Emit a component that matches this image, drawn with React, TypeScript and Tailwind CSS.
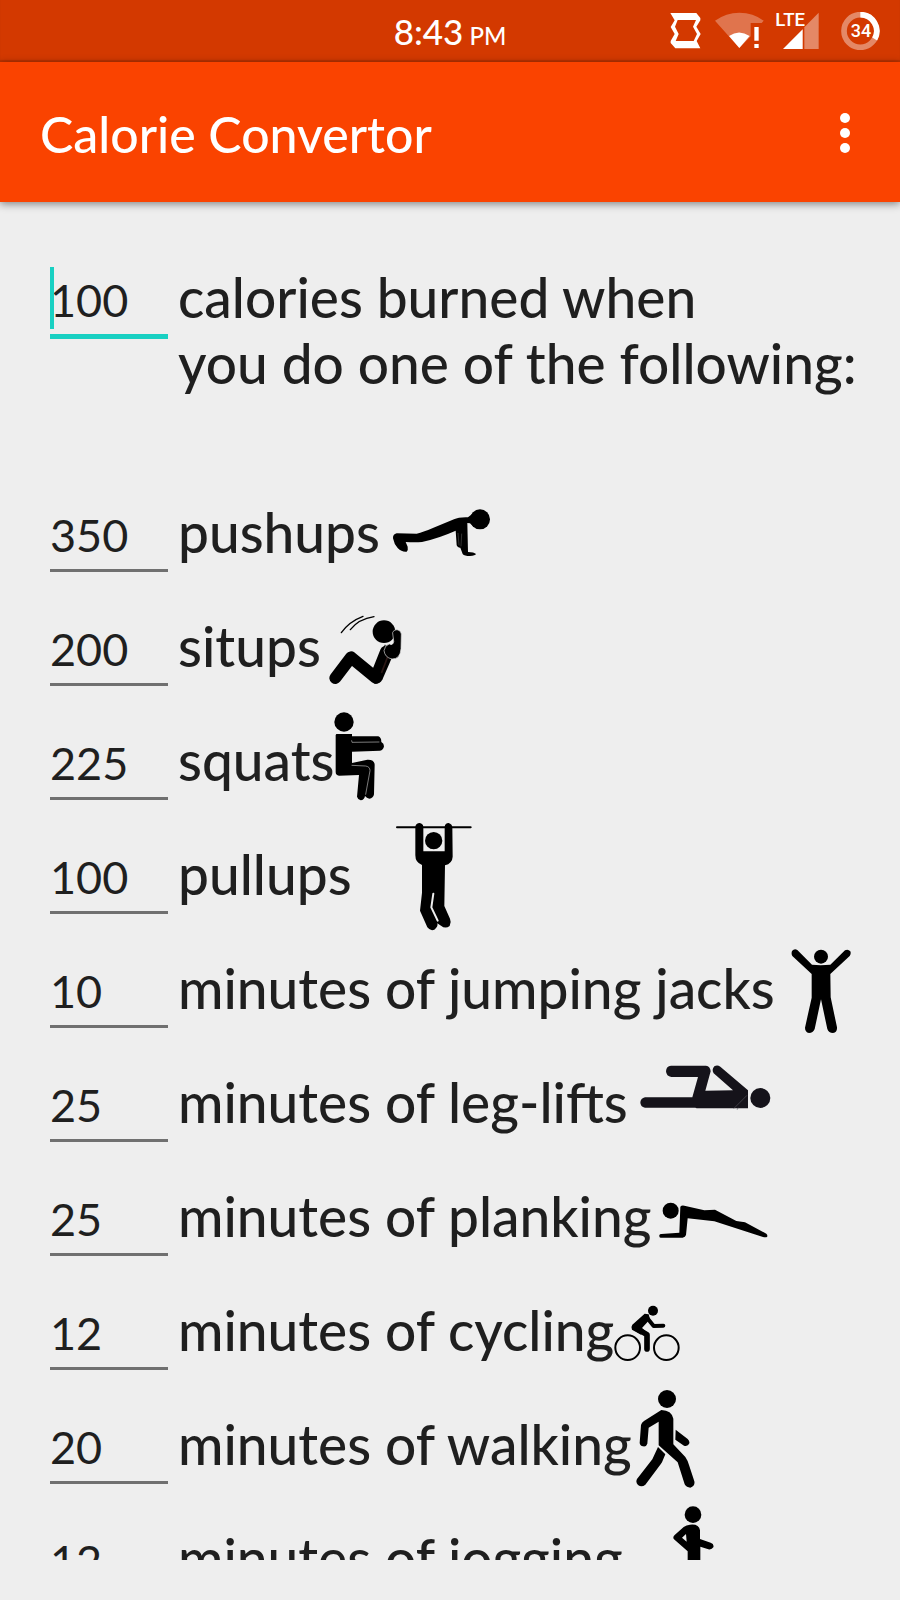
import type { ReactNode } from "react";

type FigureProps = { viewBox: string; className: string; children: ReactNode };

function Figure({ viewBox, className, children }: FigureProps) {
  return (
    <svg
      aria-hidden="true"
      viewBox={viewBox}
      className={`h-[114px] shrink-0 ${className}`}
      fill="#000"
      stroke="#000"
      strokeWidth="0"
      strokeLinecap="round"
      strokeLinejoin="round"
    >
      {children}
    </svg>
  );
}

const pushups = (
  <Figure viewBox="36 -44 294 342" className="ml-3 w-[98px]">
    <circle cx="300" cy="86" r="30" />
    <path d="M50 128Q38 131 39 143Q42 160 53 172Q66 185 80 183Q85 177 83 168L77 154Q105 156 126 154Q178 142 227 120L230 164Q233 172 241 171L248 190Q253 196 270 196Q286 195 288 190Q282 184 264 184L262 97L270 98L282 110L284 64L264 80Q236 79 222 86L164 110Q130 125 110 129Z" />
    <path d="M234 128L237 163M243 166L245 130" fill="none" stroke="#999" strokeWidth="1" />
  </Figure>
);

const situps = (
  <Figure viewBox="56 -31 219 342" className="ml-2 w-[73px]">
    <path d="M93 97Q116 64 158 48M120 88Q145 56 191 49" fill="none" strokeWidth="4" />
    <circle cx="221" cy="94" r="34" />
    <path d="M75 233L122 171L196 232L227 154" fill="none" strokeWidth="36" />
    <path d="M185 220L224 132L243 176L216 238Q208 252 192 250Z" />
    <path d="M214 216Q224 191 234 163" fill="none" stroke="#2b1715" strokeWidth="5" />
    <path d="M247 96Q249 88 260 88Q272 90 273 101L272 145Q270 176 245 176Q224 172 221 151Q223 135 237 131Q247 137 250 125Z" stroke="#ddd" strokeWidth="2" />
  </Figure>
);

const squats = (
  <Figure viewBox="45 11 150 342" className="w-[50px]">
    <circle cx="75" cy="65" r="29" />
    <path d="M50 104L52 101L99 101L99 108L178 108Q187 111 187 125Q195 129 195 138Q193 150 183 151L99 154L99 188L145 178Q166 177 167 193L165 282Q163 294 151 295Q143 294 138 287Q136 299 125 300Q116 297 114 289L120 224L60 226Q50 225 50 215Z" />
    <path d="M98 121L99 126L180 125M99 195L140 197Q153 199 153 211L140 282" fill="none" stroke="#b8b8b8" strokeWidth="2" />
  </Figure>
);

const pullups = (
  <Figure viewBox="46 24 228 342" className="ml-11 w-[76px]">
    <path d="M49 52H270" strokeWidth="6" />
    <circle cx="159" cy="92" r="26" />
    <path d="M104 50Q106 39 117 39Q127 41 128 50V124H192V50Q193 40 204 39Q214 42 215 51L216 140Q215 160 193 166L191 288L208 326Q213 337 207 348Q194 358 181 347L170 340Q173 350 161 359Q149 364 140 352L118 302L124 248V165Q104 158 104 136Z" />
    <path d="M158 251L152 292L171 332" fill="none" stroke="#eeeeee" strokeWidth="6" />
  </Figure>
);

const jumpingJacks = (
  <Figure viewBox="64 6 180 342" className="ml-4 w-[60px]">
    <circle cx="154" cy="80" r="21" />
    <path d="M67 63Q74 55 83 60L127 104L153 106L182 104L226 61Q235 56 242 64Q245 71 240 78L182 132L183 202L202 292Q203 307 190 309Q177 309 173 297L154 208L135 297Q130 309 118 309Q106 306 106 293L126 203V132L68 78Q64 71 67 63Z" />
  </Figure>
);

const legLifts = (
  <Figure viewBox="62 -11 393 342" className="ml-3 w-[131px]">
    <g fill="#15131a">
      <circle cx="423" cy="145" r="30" />
      <path d="M77 143H219L236 82H156Q141 80 140 65Q141 49 155 48H260Q273 50 274 65L258 123L341 122L283 71Q276 60 285 50Q294 45 303 51L386 122V176H232L228 174H77Q63 172 63 158Q64 146 77 143Z" />
    </g>
    <path d="M344 176L382 138M354 179L356 175" stroke="#55535a" strokeWidth="2" />
  </Figure>
);

const planking = (
  <Figure viewBox="182 -89 327 342" className="ml-2 w-[109px]">
    <circle cx="217" cy="63" r="24" />
    <path d="M246 51Q250 46 258 48L318 62L350 60L414 94L440 98L504 132Q509 137 506 142Q501 144 494 142L348 95L268 86L263 136Q261 143 253 144H187Q182 143 183 137Q184 133 189 133L243 129Z" />
  </Figure>
);

const cycling = (
  <Figure viewBox="44 253 198 342" className="w-[66px]">
    <g fill="none">
      <circle cx="85" cy="474" r="37" strokeWidth="6" />
      <circle cx="201" cy="474" r="37" strokeWidth="6" />
      <path d="M143 384L163 409L192 408" strokeWidth="12" />
      <path d="M137 384L107 414L143 435V478" strokeWidth="17" />
    </g>
    <path d="M136 372L148 374L152 389L128 415L138 424L125 435L98 420Q94 412 99 405Z" />
    <circle cx="161" cy="363" r="15" />
  </Figure>
);

const walking = (
  <Figure viewBox="53 26 177 342" className="ml-1 w-[59px]">
    <circle cx="146" cy="59" r="27" />
    <path d="M129 92Q160 93 165 118V195L201 233Q208 243 212 257L228 306Q231 320 216 325Q205 325 199 315L178 249L121 198V127L91 145L87 193Q84 203 74 201Q65 200 64 191L68 137Q70 130 77 125Z" />
    <path d="M119 203L141 225L131 249Q128 254 123 260L81 316Q70 325 59 317Q51 309 56 299L102 240ZM172 151L208 179Q216 187 212 194Q206 202 197 199L171 181Z" />
  </Figure>
);

const jogging = (
  <Figure viewBox="154 368 126 342" className="ml-[50px] w-[42px]">
    <circle cx="214" cy="406" r="25" />
    <path d="M205 436Q232 433 235 453V479L267 490Q278 494 275 504Q270 512 260 510L236 502V570L266 620L256 690H232L238 630L200 575L176 640L130 650V628L160 622L198 550V516L157 480Q152 473 159 467L186 443Q194 437 205 436ZM193 464L181 475L195 487Z" fillRule="evenodd" />
  </Figure>
);

const exercises = [
  { id: "pushups", amount: "350", label: "pushups", figure: pushups },
  { id: "situps", amount: "200", label: "situps", figure: situps },
  { id: "squats", amount: "225", label: "squats", figure: squats },
  { id: "pullups", amount: "100", label: "pullups", figure: pullups },
  { id: "jacks", amount: "10", label: "minutes of jumping jacks", figure: jumpingJacks },
  { id: "leglifts", amount: "25", label: "minutes of leg-lifts", figure: legLifts },
  { id: "planking", amount: "25", label: "minutes of planking", figure: planking },
  { id: "cycling", amount: "12", label: "minutes of cycling", figure: cycling },
  { id: "walking", amount: "20", label: "minutes of walking", figure: walking },
  { id: "jogging", amount: "12", label: "minutes of jogging", figure: jogging },
];

function StatusBar() {
  return (
    <div className="grid h-[62px] shrink-0 grid-cols-[1fr_auto_1fr] items-center bg-[#d33900] px-5 text-white shadow-[inset_0_-2px_1px_#b93200]">
      <div />
      <div className="flex items-baseline gap-1.5 pt-1 font-medium">
        <span className="text-[35px] leading-10">8:43</span>
        <span className="text-[24px] leading-10">PM</span>
      </div>
      <div className="flex items-center justify-end">
        <svg aria-hidden="true" viewBox="61 36 93 114" className="h-[38px] w-[31px]" fill="#fff">
          <path fillRule="evenodd" d="M62 39H140L152 54V61L140 80L153 102L141 123L152 145H77L63 129V123L75 102L63 81L75 61ZM84 60L76 80L87 102L78 123H132L142 102L130 80L139 60Z" />
        </svg>
        <svg aria-hidden="true" viewBox="197 36 147 114" className="ml-[14px] h-[38px] w-[49px]" fill="#fff">
          <path fillOpacity=".3" d="M197 62Q230 38 270 38Q312 38 343 62L337 69H304V109L270 144Z" />
          <path d="M239 108Q269 87 301 108L270 144ZM315 81H328V122H315ZM315 132H328V144H315Z" />
        </svg>
        <svg aria-label="LTE" viewBox="380 36 129 114" className="ml-3 h-[38px] w-[43px] overflow-visible" fill="#fff">
          <path fillOpacity=".4" d="M508 38V147H465V82Z" />
          <path d="M460 88V147H401Z" />
          <text x="378" y="77" className="font-['Roboto',sans-serif] text-[56px] font-medium">LTE</text>
        </svg>
        <svg aria-label="Battery 34" viewBox="574 36 117 114" className="ml-[22px] h-[38px] w-[39px]" fill="none" stroke="#fff" strokeWidth="17">
          <circle cx="632" cy="93" r="49" strokeOpacity=".4" />
          <path d="M632 44A49 49 0 0 1 675 117" />
          <text x="634" y="112" textAnchor="middle" fill="#fff" stroke="none" className="font-['Roboto',sans-serif] text-[54px] font-medium">34</text>
        </svg>
      </div>
    </div>
  );
}

export default function App() {
  return (
    <div className="flex h-screen flex-col bg-[#eeeeee] font-['Lato',sans-serif] text-[#1f1f1f]">
      <StatusBar />
      <header className="z-10 flex h-[140px] shrink-0 items-center justify-between bg-[#fa4300] pr-8 pl-10 text-white shadow-[0_2px_8px_rgba(0,0,0,0.45)]">
        <h1 className="pt-1 text-[50px] leading-[60px] font-medium">Calorie Convertor</h1>
        <button type="button" aria-label="More options" className="flex w-[46px] flex-col items-center gap-[5px] pt-4 pb-3.5">
          <span className="size-[10px] rounded-full bg-white" />
          <span className="size-[10px] rounded-full bg-white" />
          <span className="size-[10px] rounded-full bg-white" />
        </button>
      </header>
      <main className="mb-10 min-h-0 flex-1 overflow-y-auto pt-[39px] pl-[50px] [scrollbar-width:none]">
        <div className="relative flex h-[235px] items-start gap-[10px]">
          <input
            id="calories"
            inputMode="numeric"
            defaultValue="100"
            className="h-[98px] w-[118px] shrink-0 border-b-[5px] border-[#18d0c2] bg-transparent pt-6 text-[45px] outline-none"
          />
          <span className="absolute top-[26px] left-0 h-[62px] w-1 bg-[#18d0c2]" />
          <label htmlFor="calories" className="pt-[23px] text-[55px] leading-[66px] font-medium whitespace-nowrap">
            calories burned when
            <br />
            you do one of the following:
          </label>
        </div>
        <ul>
          {exercises.map((exercise) => (
            <li key={exercise.id} className="flex h-[114px] items-start whitespace-nowrap">
              <input
                id={exercise.id}
                inputMode="numeric"
                defaultValue={exercise.amount}
                className="mr-[10px] h-24 w-[118px] shrink-0 border-b-[3px] border-[#707070] bg-transparent pt-6 text-[45px] outline-none"
              />
              <label htmlFor={exercise.id} className="pt-[23px] text-[55px] leading-[66px] font-medium">
                {exercise.label}
              </label>
              {exercise.figure}
            </li>
          ))}
        </ul>
      </main>
    </div>
  );
}
